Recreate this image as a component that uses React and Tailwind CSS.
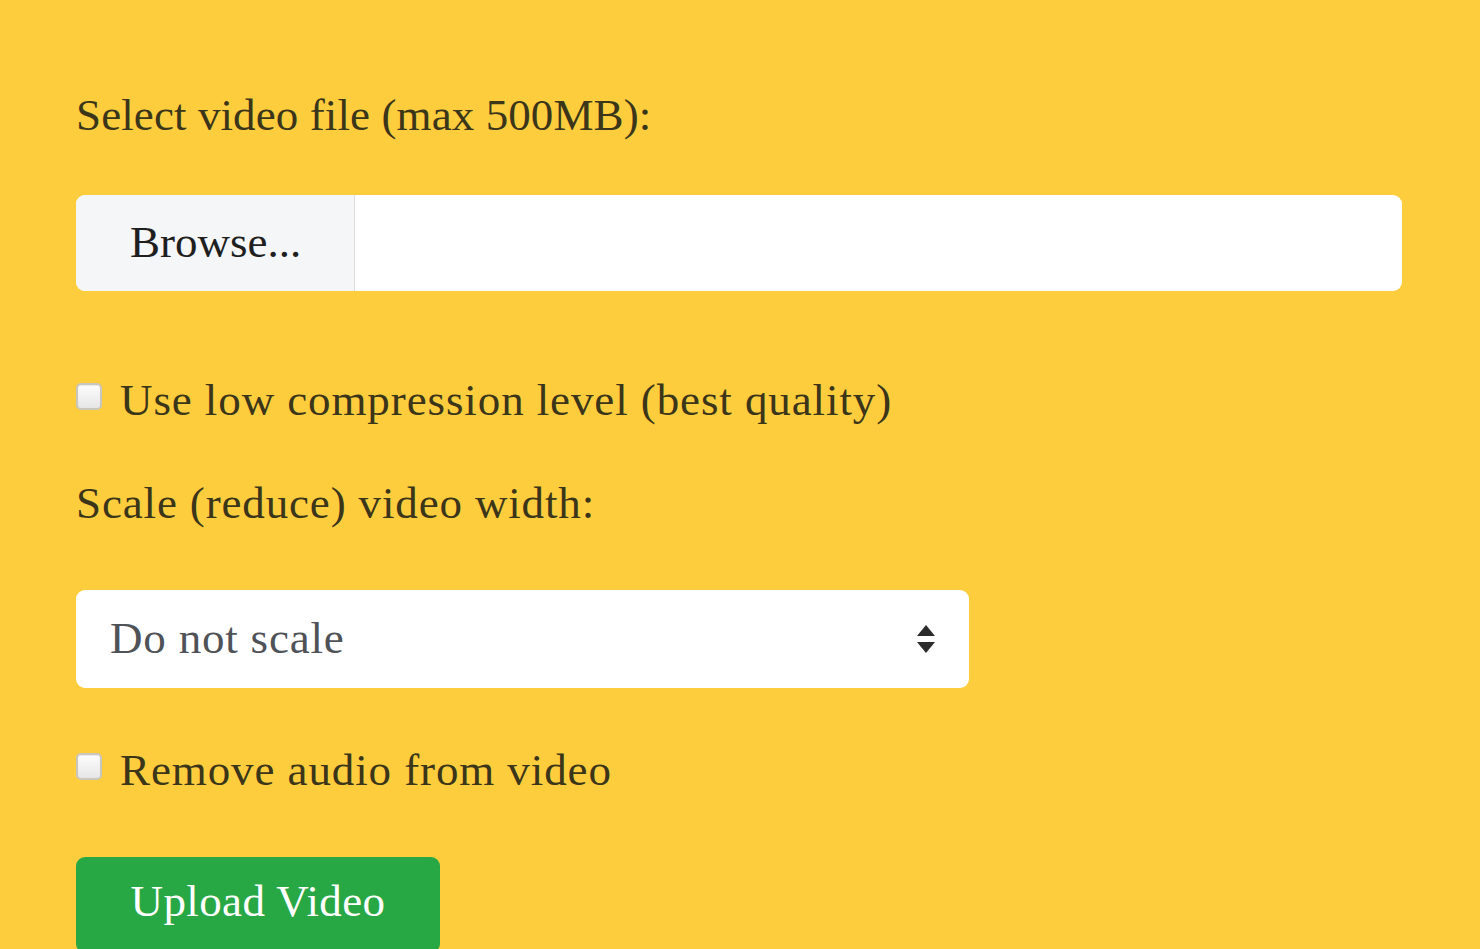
import React, { useState } from 'react';

const serif = "font-['Liberation_Serif','Times_New_Roman',serif]";

function Check({ label, checked, onChange }) {
  return (
    <label className="flex items-start h-[68px] leading-[68px] cursor-pointer">
      <span className="mt-[17px] w-[26px] h-[27px] shrink-0 rounded-[5px] border-2 border-[#c9c6bd] bg-gradient-to-b from-[#fdfdfd] to-[#e6e6e6] shadow-[inset_0_1px_1px_rgba(0,0,0,0.08)]">
        <input type="checkbox" className="hidden" checked={checked} onChange={onChange} />
      </span>
      <span className="ml-[18px] tracking-[0.9px]">{label}</span>
    </label>
  );
}

export default function App() {
  const [lowCompression, setLowCompression] = useState(false);
  const [removeAudio, setRemoveAudio] = useState(false);

  return (
    <div className={`min-h-[949px] bg-[#fecd3e] text-[#3b3519] text-[45px] ${serif} overflow-hidden`}>
      <div className="pl-[76px] pr-[78px] pt-[81px]">
        {/* File picker */}
        <div className="h-[68px] leading-[68px] tracking-[0.1px]">Select video file (max 500MB):</div>
        <div className="mt-[46px] flex h-[96px] rounded-[9px] bg-white overflow-hidden">
          <div className="w-[279px] shrink-0 bg-[#f5f6f8] border-r border-[#dcdcdc] pl-[54px] flex items-center text-[#1f1f1f]">
            Browse...
          </div>
          <div className="flex-1" />
        </div>

        {/* Options */}
        <div className="mt-[75px]">
          <Check
            label="Use low compression level (best quality)"
            checked={lowCompression}
            onChange={() => setLowCompression(v => !v)}
          />
        </div>

        <div className="mt-[35px] h-[68px] leading-[68px] tracking-[0.85px]">Scale (reduce) video width:</div>
        <div className="mt-[53px] w-[893px] h-[98px] rounded-[9px] bg-white flex items-center justify-between pl-[34px] pr-[33px] text-[#4f5257]">
          <span className="tracking-[0.8px]">Do not scale</span>
          <svg width="20" height="30" viewBox="0 0 20 30">
            <path d="M10 1 L19 12 L1 12 Z" fill="#2b2b2b" />
            <path d="M1 18 L19 18 L10 29 Z" fill="#2b2b2b" />
          </svg>
        </div>

        <div className="mt-[48px]">
          <Check
            label="Remove audio from video"
            checked={removeAudio}
            onChange={() => setRemoveAudio(v => !v)}
          />
        </div>

        <button className="mt-[53px] w-[364px] h-[96px] rounded-[9px] bg-[#28a745] text-white text-[45px] leading-[68px] tracking-[0.4px] flex items-start justify-center pt-[10px]">
          Upload Video
        </button>
      </div>
    </div>
  );
}
